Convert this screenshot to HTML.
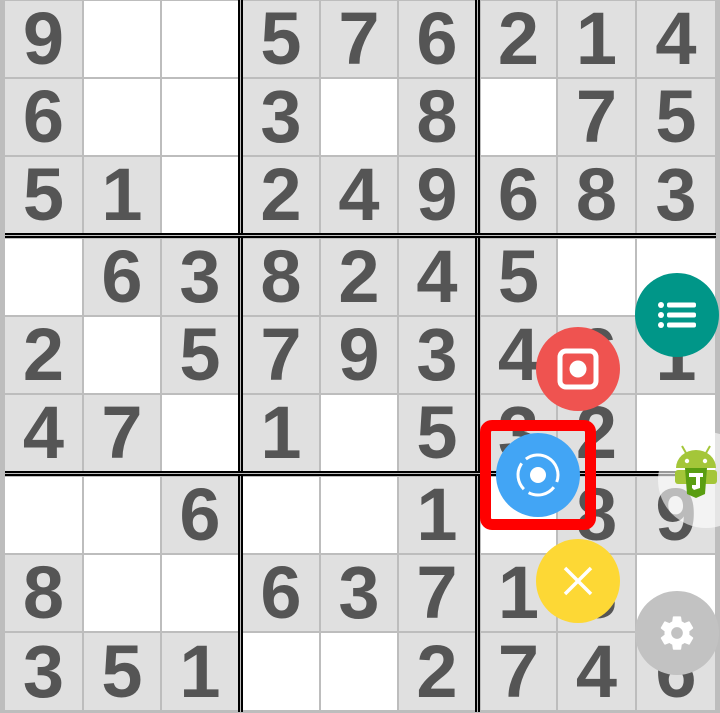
<!DOCTYPE html>
<html><head><meta charset="utf-8"><style>
html,body{margin:0;padding:0;}
body{width:720px;height:712px;position:relative;overflow:hidden;background:#bdbdbd;font-family:"Liberation Sans",sans-serif;}
.c{position:absolute;display:flex;align-items:center;justify-content:center;font-weight:bold;font-size:74px;color:#555;line-height:1;}
.g{background:#e0e0e0}.w{background:#fff}
.b{position:absolute;background:#000}
.fab{position:absolute;border-radius:50%;width:84px;height:84px;display:flex;align-items:center;justify-content:center;}
</style></head><body>
<!-- row0 y1 h76 -->
<div class="c g" style="left:5px;top:1px;width:77px;height:76px">9</div>
<div class="c w" style="left:84px;top:1px;width:76px;height:76px"></div>
<div class="c w" style="left:162px;top:1px;width:76px;height:76px"></div>
<div class="c g" style="left:243px;top:1px;width:76px;height:76px">5</div>
<div class="c g" style="left:321px;top:1px;width:76px;height:76px">7</div>
<div class="c g" style="left:399px;top:1px;width:76px;height:76px">6</div>
<div class="c g" style="left:481px;top:1px;width:75px;height:76px">2</div>
<div class="c g" style="left:558px;top:1px;width:77px;height:76px">1</div>
<div class="c g" style="left:637px;top:1px;width:78px;height:76px">4</div>
<!-- row1 -->
<div class="c g" style="left:5px;top:79px;width:77px;height:76px">6</div>
<div class="c w" style="left:84px;top:79px;width:76px;height:76px"></div>
<div class="c w" style="left:162px;top:79px;width:76px;height:76px"></div>
<div class="c g" style="left:243px;top:79px;width:76px;height:76px">3</div>
<div class="c w" style="left:321px;top:79px;width:76px;height:76px"></div>
<div class="c g" style="left:399px;top:79px;width:76px;height:76px">8</div>
<div class="c w" style="left:481px;top:79px;width:75px;height:76px"></div>
<div class="c g" style="left:558px;top:79px;width:77px;height:76px">7</div>
<div class="c g" style="left:637px;top:79px;width:78px;height:76px">5</div>
<!-- row2 -->
<div class="c g" style="left:5px;top:157px;width:77px;height:76px">5</div>
<div class="c g" style="left:84px;top:157px;width:76px;height:76px">1</div>
<div class="c w" style="left:162px;top:157px;width:76px;height:76px"></div>
<div class="c g" style="left:243px;top:157px;width:76px;height:76px">2</div>
<div class="c g" style="left:321px;top:157px;width:76px;height:76px">4</div>
<div class="c g" style="left:399px;top:157px;width:76px;height:76px">9</div>
<div class="c g" style="left:481px;top:157px;width:75px;height:76px">6</div>
<div class="c g" style="left:558px;top:157px;width:77px;height:76px">8</div>
<div class="c g" style="left:637px;top:157px;width:78px;height:76px">3</div>
<!-- row3 -->
<div class="c w" style="left:5px;top:239px;width:77px;height:76px"></div>
<div class="c g" style="left:84px;top:239px;width:76px;height:76px">6</div>
<div class="c g" style="left:162px;top:239px;width:76px;height:76px">3</div>
<div class="c g" style="left:243px;top:239px;width:76px;height:76px">8</div>
<div class="c g" style="left:321px;top:239px;width:76px;height:76px">2</div>
<div class="c g" style="left:399px;top:239px;width:76px;height:76px">4</div>
<div class="c g" style="left:481px;top:239px;width:75px;height:76px">5</div>
<div class="c w" style="left:558px;top:239px;width:77px;height:76px"></div>
<div class="c w" style="left:637px;top:239px;width:78px;height:76px"></div>
<!-- row4 -->
<div class="c g" style="left:5px;top:317px;width:77px;height:76px">2</div>
<div class="c w" style="left:84px;top:317px;width:76px;height:76px"></div>
<div class="c g" style="left:162px;top:317px;width:76px;height:76px">5</div>
<div class="c g" style="left:243px;top:317px;width:76px;height:76px">7</div>
<div class="c g" style="left:321px;top:317px;width:76px;height:76px">9</div>
<div class="c g" style="left:399px;top:317px;width:76px;height:76px">3</div>
<div class="c g" style="left:481px;top:317px;width:75px;height:76px">4</div>
<div class="c g" style="left:558px;top:317px;width:77px;height:76px">6</div>
<div class="c g" style="left:637px;top:317px;width:78px;height:76px">1</div>
<!-- row5 -->
<div class="c g" style="left:5px;top:395px;width:77px;height:76px">4</div>
<div class="c g" style="left:84px;top:395px;width:76px;height:76px">7</div>
<div class="c w" style="left:162px;top:395px;width:76px;height:76px"></div>
<div class="c g" style="left:243px;top:395px;width:76px;height:76px">1</div>
<div class="c w" style="left:321px;top:395px;width:76px;height:76px"></div>
<div class="c g" style="left:399px;top:395px;width:76px;height:76px">5</div>
<div class="c g" style="left:481px;top:395px;width:75px;height:76px">3</div>
<div class="c g" style="left:558px;top:395px;width:77px;height:76px">2</div>
<div class="c w" style="left:637px;top:395px;width:78px;height:76px"></div>
<!-- row6 -->
<div class="c w" style="left:5px;top:477px;width:77px;height:76px"></div>
<div class="c w" style="left:84px;top:477px;width:76px;height:76px"></div>
<div class="c g" style="left:162px;top:477px;width:76px;height:76px">6</div>
<div class="c w" style="left:243px;top:477px;width:76px;height:76px"></div>
<div class="c w" style="left:321px;top:477px;width:76px;height:76px"></div>
<div class="c g" style="left:399px;top:477px;width:76px;height:76px">1</div>
<div class="c w" style="left:481px;top:477px;width:75px;height:76px"></div>
<div class="c g" style="left:558px;top:477px;width:77px;height:76px">8</div>
<div class="c g" style="left:637px;top:477px;width:78px;height:76px">9</div>
<!-- row7 -->
<div class="c g" style="left:5px;top:555px;width:77px;height:76px">8</div>
<div class="c w" style="left:84px;top:555px;width:76px;height:76px"></div>
<div class="c w" style="left:162px;top:555px;width:76px;height:76px"></div>
<div class="c g" style="left:243px;top:555px;width:76px;height:76px">6</div>
<div class="c g" style="left:321px;top:555px;width:76px;height:76px">3</div>
<div class="c g" style="left:399px;top:555px;width:76px;height:76px">7</div>
<div class="c g" style="left:481px;top:555px;width:75px;height:76px">1</div>
<div class="c g" style="left:558px;top:555px;width:77px;height:76px">8</div>
<div class="c w" style="left:637px;top:555px;width:78px;height:76px"></div>
<!-- row8 -->
<div class="c g" style="left:5px;top:633px;width:77px;height:77px">3</div>
<div class="c g" style="left:84px;top:633px;width:76px;height:77px">5</div>
<div class="c g" style="left:162px;top:633px;width:76px;height:77px">1</div>
<div class="c w" style="left:243px;top:633px;width:76px;height:77px"></div>
<div class="c w" style="left:321px;top:633px;width:76px;height:77px"></div>
<div class="c g" style="left:399px;top:633px;width:76px;height:77px">2</div>
<div class="c g" style="left:481px;top:633px;width:75px;height:77px">7</div>
<div class="c g" style="left:558px;top:633px;width:77px;height:77px">4</div>
<div class="c g" style="left:637px;top:633px;width:78px;height:77px">6</div>

<!-- thick lines -->
<div class="b" style="left:238px;top:0;width:2px;height:712px"></div>
<div class="b" style="left:241px;top:0;width:2px;height:712px"></div>
<div class="b" style="left:475px;top:0;width:2px;height:712px"></div>
<div class="b" style="left:478px;top:0;width:2px;height:712px"></div>
<div class="b" style="left:5px;top:233px;width:711px;height:2px"></div>
<div class="b" style="left:5px;top:236px;width:711px;height:2px"></div>
<div class="b" style="left:5px;top:471px;width:711px;height:2px"></div>
<div class="b" style="left:5px;top:474px;width:711px;height:2px"></div>
<div style="position:absolute;left:238px;top:235px;width:5px;height:1px;background:#bdbdbd"></div>
<div style="position:absolute;left:475px;top:235px;width:5px;height:1px;background:#bdbdbd"></div>
<div style="position:absolute;left:238px;top:473px;width:5px;height:1px;background:#bdbdbd"></div>
<div style="position:absolute;left:475px;top:473px;width:5px;height:1px;background:#bdbdbd"></div>

<!-- teal list fab -->
<div class="fab" style="left:635px;top:273px;background:#009688">
<svg width="40" height="30" viewBox="0 0 40 30"><g fill="#fff"><circle cx="4" cy="5" r="3"/><circle cx="4" cy="15" r="3"/><circle cx="4" cy="25" r="3"/><rect x="10" y="2.5" width="29" height="5" rx="2"/><rect x="10" y="12.5" width="29" height="5" rx="2"/><rect x="10" y="22.5" width="29" height="5" rx="2"/></g></svg>
</div>
<!-- red record fab -->
<div class="fab" style="left:536px;top:327px;background:#ef5350">
<svg width="44" height="44" viewBox="0 0 44 44"><rect x="4" y="4" width="36" height="36" rx="6" fill="none" stroke="#fff" stroke-width="5"/><circle cx="22" cy="22" r="8.5" fill="#fff"/></svg>
</div>
<!-- red highlight box -->
<div style="position:absolute;left:480px;top:420px;width:94px;height:88px;border:11px solid #ff0000;border-radius:12px;background:transparent"></div>
<!-- blue fab -->
<div class="fab" style="left:496px;top:433px;background:#42a5f5">
<svg width="50" height="50" viewBox="0 0 50 50"><circle cx="25" cy="25" r="8" fill="#fff"/><circle cx="25" cy="25" r="20" fill="none" stroke="#fff" stroke-width="3" stroke-dasharray="28 6" transform="rotate(-60 25 25)"/></svg>
</div>
<!-- android -->
<div style="position:absolute;left:658px;top:432px;width:96px;height:96px;border-radius:50%;background:rgba(255,255,255,0.6)"></div>
<svg style="position:absolute;left:672px;top:444px" width="48" height="60" viewBox="0 0 48 60">
<line x1="10" y1="2" x2="14" y2="9" stroke="#a4c639" stroke-width="2"/><line x1="38" y1="2" x2="34" y2="9" stroke="#a4c639" stroke-width="2"/>
<path d="M4 24 A20 18 0 0 1 44 24 Z" fill="#a4c639"/>
<circle cx="15" cy="17" r="2.2" fill="#fff"/><circle cx="33" cy="17" r="2.2" fill="#fff"/>
<rect x="3" y="26" width="42" height="14" rx="3" fill="#a4c639"/>
<path d="M13 24 L35 24 L33 50 L24 54 L15 50 Z" fill="#5a9e12"/>
<path d="M17 29 L31 29 L31 33 L28 33 L28 44 L22 46 L20 44 L20 41 L24 41 L24 33 L17 33 Z" fill="#fff"/>
</svg>
<!-- yellow X fab -->
<div class="fab" style="left:536px;top:539px;background:#fdd835">
<svg width="32" height="32" viewBox="0 0 32 32"><path d="M3 3 L29 29 M29 3 L3 29" stroke="#fff" stroke-width="3.5"/></svg>
</div>
<!-- gear fab -->
<div class="fab" style="left:635px;top:591px;background:#c2c2c2">
<svg width="40" height="40" viewBox="0 0 24 24"><path fill="#fff" d="M19.4 13c.04-.3.06-.66.06-1s-.02-.7-.06-1l2.1-1.65c.2-.15.25-.42.12-.64l-2-3.46c-.12-.22-.39-.3-.61-.22l-2.49 1c-.52-.4-1.08-.73-1.69-.98l-.38-2.65A.49.49 0 0 0 14 2h-4c-.25 0-.46.18-.49.42l-.38 2.65c-.61.25-1.17.59-1.69.98l-2.49-1c-.23-.09-.49 0-.61.22l-2 3.46c-.13.22-.07.49.12.64L4.57 11c-.04.32-.07.65-.07 1s.03.68.07 1l-2.11 1.65c-.19.15-.24.42-.12.64l2 3.46c.12.22.39.3.61.22l2.49-1c.52.4 1.08.73 1.69.98l.38 2.65c.03.24.24.42.49.42h4c.25 0 .46-.18.49-.42l.38-2.65c.61-.25 1.17-.59 1.69-.98l2.49 1c.23.09.49 0 .61-.22l2-3.46c.12-.22.07-.49-.12-.64L19.4 13zM12 15.5A3.5 3.5 0 1 1 12 8.5a3.5 3.5 0 0 1 0 7z"/></svg>
</div>
</body></html>
